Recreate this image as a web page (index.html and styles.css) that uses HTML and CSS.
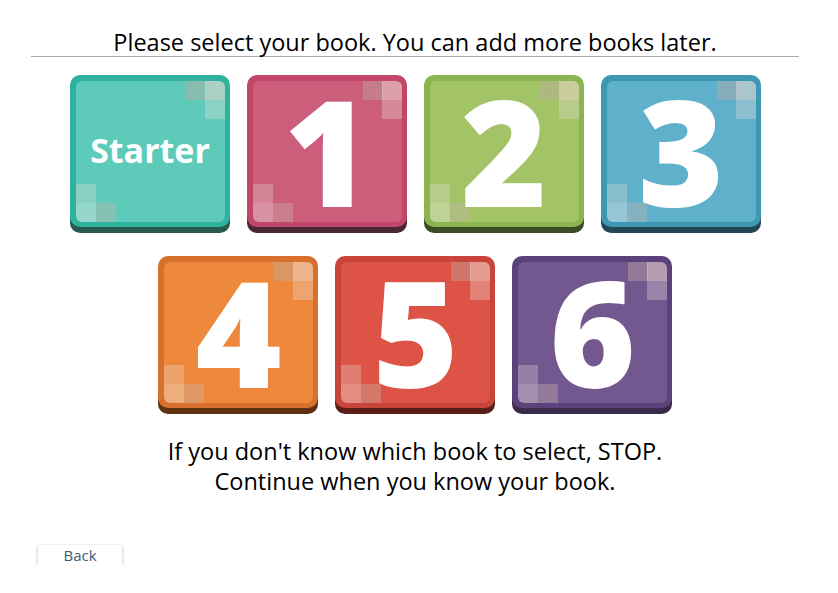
FILE: index.html
```html
<!DOCTYPE html>
<html>
<head>
<meta charset="utf-8">
<link rel="stylesheet" href="styles.css">
</head>
<body>
<div class="page">
  <div class="header">Please select your book. You can add more books later.</div>
  <div class="books">
    <div class="row">
      <div class="tile teal"><div class="face"><span class="label starter">Starter</span><i class="sq a"></i><i class="sq b"></i><i class="sq c"></i><i class="sq d"></i><i class="sq e"></i><i class="sq f"></i></div></div>
      <div class="tile pink"><div class="face"><span class="label">1</span><i class="sq a"></i><i class="sq b"></i><i class="sq c"></i><i class="sq d"></i><i class="sq e"></i><i class="sq f"></i></div></div>
      <div class="tile green"><div class="face"><span class="label">2</span><i class="sq a"></i><i class="sq b"></i><i class="sq c"></i><i class="sq d"></i><i class="sq e"></i><i class="sq f"></i></div></div>
      <div class="tile blue"><div class="face"><span class="label">3</span><i class="sq a"></i><i class="sq b"></i><i class="sq c"></i><i class="sq d"></i><i class="sq e"></i><i class="sq f"></i></div></div>
    </div>
    <div class="row">
      <div class="tile orange"><div class="face"><span class="label">4</span><i class="sq a"></i><i class="sq b"></i><i class="sq c"></i><i class="sq d"></i><i class="sq e"></i><i class="sq f"></i></div></div>
      <div class="tile red"><div class="face"><span class="label">5</span><i class="sq a"></i><i class="sq b"></i><i class="sq c"></i><i class="sq d"></i><i class="sq e"></i><i class="sq f"></i></div></div>
      <div class="tile purple"><div class="face"><span class="label">6</span><i class="sq a"></i><i class="sq b"></i><i class="sq c"></i><i class="sq d"></i><i class="sq e"></i><i class="sq f"></i></div></div>
    </div>
  </div>
  <div class="note">If you don't know which book to select, STOP.<br>Continue when you know your book.</div>
</div>
<button class="back">Back</button>
</body>
</html>
```

FILE: styles.css
```css
html, body {
  margin: 0;
  padding: 0;
  background: #fff;
}
body {
  font-family: "Open Sans", "DejaVu Sans", sans-serif;
  color: #000;
}
.page {
  width: 768px;
  margin-left: 31px;
}
.header {
  font-size: 23.5px;
  line-height: 28px;
  text-align: center;
  padding-top: 28px;
  border-bottom: 1px solid #aaa;
  white-space: nowrap;
}
.books {
  display: flex;
  flex-direction: column;
  align-items: center;
  gap: 29px;
  margin-top: 18px;
}
.row {
  display: flex;
  gap: 17px;
}
.tile {
  width: 160px;
  height: 152px;
  box-sizing: border-box;
  padding: 6px 5px 5px 6px;
  border-radius: 10px;
}
.face {
  position: relative;
  height: 100%;
  border-radius: 6px;
  display: flex;
  align-items: center;
  justify-content: center;
}
.label {
  position: relative;
  z-index: 1;
  color: #fff;
  font-weight: 800;
  font-size: 147px;
  line-height: 120px;
  margin-top: -4px;
}
.label.starter {
  font-size: 34px;
  font-weight: 700;
  line-height: 40px;
  margin-top: -4px;
}
.sq {
  position: absolute;
  width: 20px;
  height: 19px;
}
.sq.a { right: 19px; top: 0; background: rgba(190, 170, 160, 0.42); }
.sq.b { right: 0; top: 0; border-top-right-radius: 6px; background: rgba(235, 215, 205, 0.55); }
.sq.c { right: 0; top: 19px; background: rgba(235, 225, 220, 0.32); }
.sq.d { left: 0; bottom: 19px; background: rgba(235, 225, 220, 0.3); }
.sq.e { left: 0; bottom: 0; border-bottom-left-radius: 6px; background: rgba(240, 235, 230, 0.38); }
.sq.f { left: 20px; bottom: 0; background: rgba(200, 180, 170, 0.38); }

.teal { background: #2fb39f; box-shadow: 0 6px 0 #28594f; }
.teal .face { background: #5ecbba; }
.pink { background: #c2466a; box-shadow: 0 6px 0 #4b2633; }
.pink .face { background: #cc5d7b; }
.green { background: #8cb54f; box-shadow: 0 6px 0 #3c4a26; }
.green .face { background: #a2c366; }
.blue { background: #3f98b3; box-shadow: 0 6px 0 #244853; }
.blue .face { background: #5eb0cb; }
.orange { background: #d7702c; box-shadow: 0 6px 0 #5c3010; }
.orange .face { background: #ee883c; }
.red { background: #c9443a; box-shadow: 0 6px 0 #5a1e18; }
.red .face { background: #dd5446; }
.purple { background: #5c427a; box-shadow: 0 6px 0 #3b2b4a; }
.purple .face { background: #73578f; }

.note {
  margin-top: 28px;
  text-align: center;
  font-size: 23.5px;
  line-height: 30px;
}
.back {
  display: block;
  margin: 49px 0 0 38px;
  width: 84px;
  height: 20px;
  padding: 0;
  border: none;
  background: #fff;
  box-shadow: 0 1px 3px rgba(0, 0, 0, 0.3);
  font-family: "Open Sans", "DejaVu Sans", sans-serif;
  font-size: 15px;
  line-height: 20px;
  color: #3d5a78;
}
```
